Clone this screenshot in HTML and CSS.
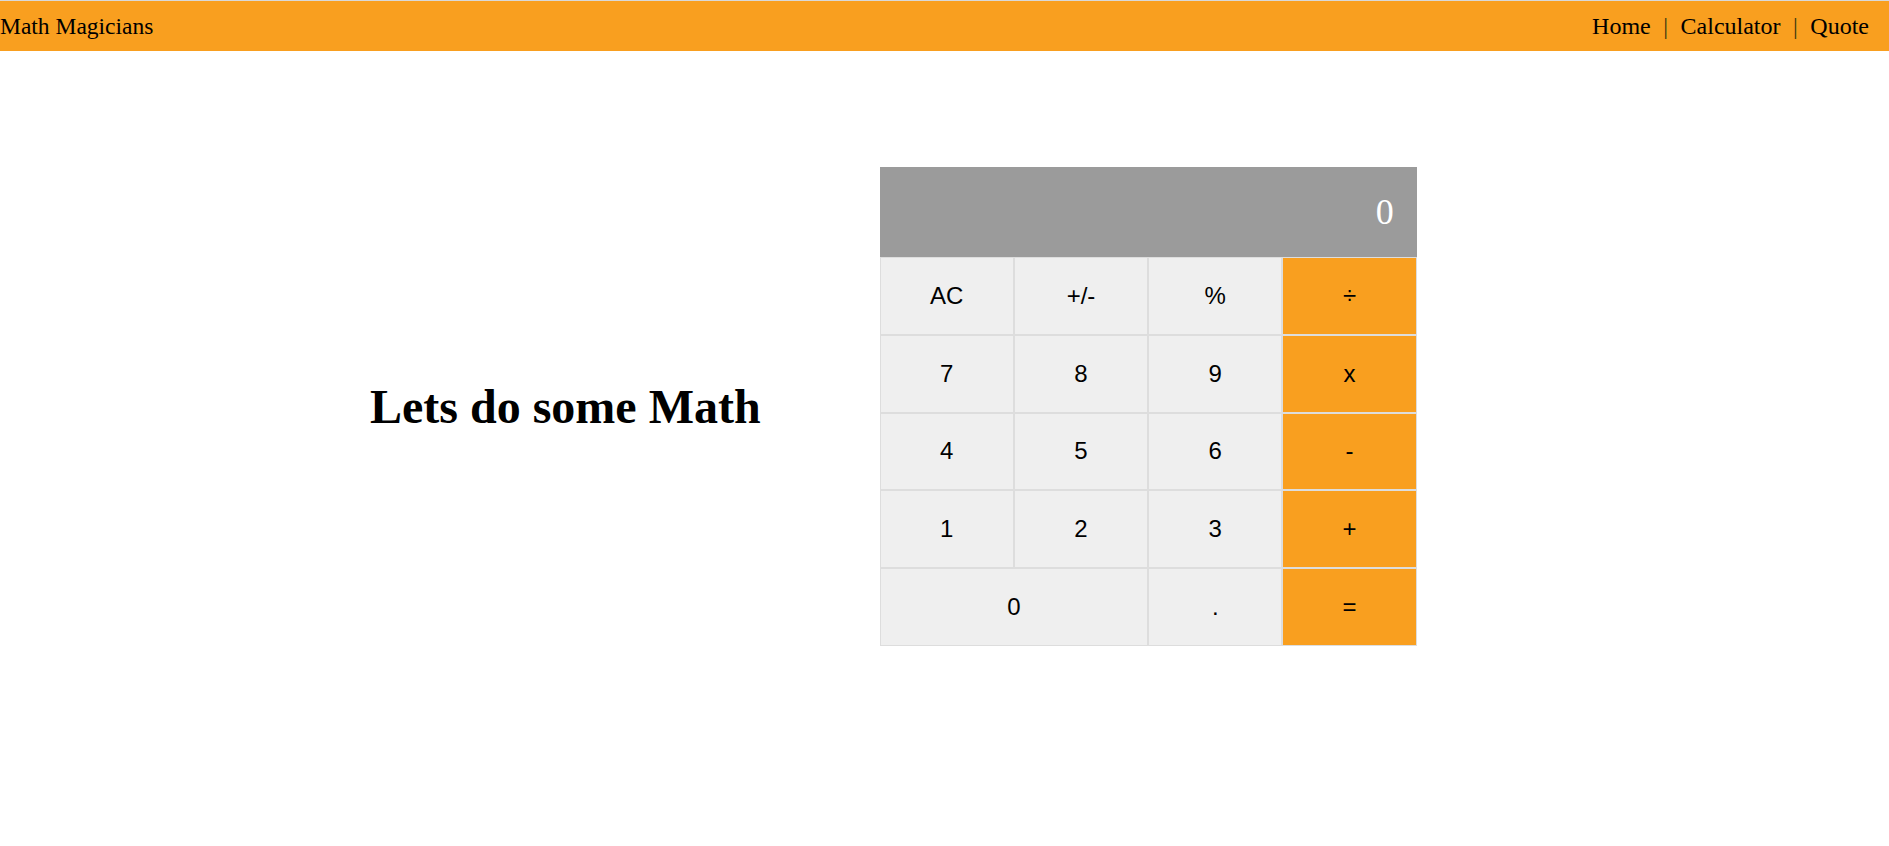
FILE: index.html
```html
<!DOCTYPE html>
<html lang="en">
<head>
<meta charset="utf-8">
<title>Math Magicians</title>
<link rel="stylesheet" href="styles.css">
</head>
<body>
<nav class="navbar">
  <span class="brand">Math Magicians</span>
  <ul class="nav-links">
    <li><a href="#">Home</a></li>
    <li class="sep">|</li>
    <li><a href="#">Calculator</a></li>
    <li class="sep">|</li>
    <li><a href="#">Quote</a></li>
  </ul>
</nav>
<main class="page">
  <h1 class="title">Lets do some Math</h1>
  <div class="calculator">
    <div class="display">0</div>
    <div class="keys">
      <button class="key">AC</button>
      <button class="key">+/-</button>
      <button class="key">%</button>
      <button class="key op">÷</button>
      <button class="key">7</button>
      <button class="key">8</button>
      <button class="key">9</button>
      <button class="key op">x</button>
      <button class="key">4</button>
      <button class="key">5</button>
      <button class="key">6</button>
      <button class="key op">-</button>
      <button class="key">1</button>
      <button class="key">2</button>
      <button class="key">3</button>
      <button class="key op">+</button>
      <button class="key wide">0</button>
      <button class="key">.</button>
      <button class="key op">=</button>
    </div>
  </div>
</main>
</body>
</html>
```
FILE: styles.css
```css
* {
  box-sizing: border-box;
}

body {
  margin: 0;
  font-family: "Liberation Serif", "Times New Roman", serif;
  color: #000;
  background: #fff;
}

.navbar {
  display: flex;
  justify-content: space-between;
  align-items: center;
  height: 51px;
  border-top: 1px solid #d9d9d9;
  background: #f99f1f;
  padding-right: 20px;
  font-size: 24px;
}

.brand {
  font-size: 23.5px;
}

.nav-links {
  display: flex;
  align-items: center;
  gap: 12.5px;
  list-style: none;
  margin: 0;
  padding: 0;
}

.nav-links a {
  color: #000;
  text-decoration: none;
}

.sep {
  color: #3a3a10;
}

.page {
  display: flex;
  align-items: center;
  gap: 119px;
  padding: 116px 0 0 370px;
}

.title {
  margin: 0;
  font-size: 48px;
  font-weight: bold;
}

.calculator {
  width: 537px;
  flex: 0 0 auto;
}

.display {
  display: flex;
  align-items: center;
  justify-content: flex-end;
  height: 90px;
  padding-right: 23px;
  background: #9b9b9b;
  color: #fff;
  font-family: "Liberation Serif", "Times New Roman", serif;
  font-size: 36px;
}

.keys {
  display: grid;
  grid-template-columns: repeat(4, 1fr);
  grid-auto-rows: 77.8px;
}

.key {
  margin: 0;
  border: 1px solid #dddddd;
  background: #efefef;
  font-family: "Liberation Sans", Arial, sans-serif;
  font-size: 24px;
  color: #000;
  padding: 0;
}

.key.op {
  background: #f99f1f;
}

.key.wide {
  grid-column: span 2;
}
```
